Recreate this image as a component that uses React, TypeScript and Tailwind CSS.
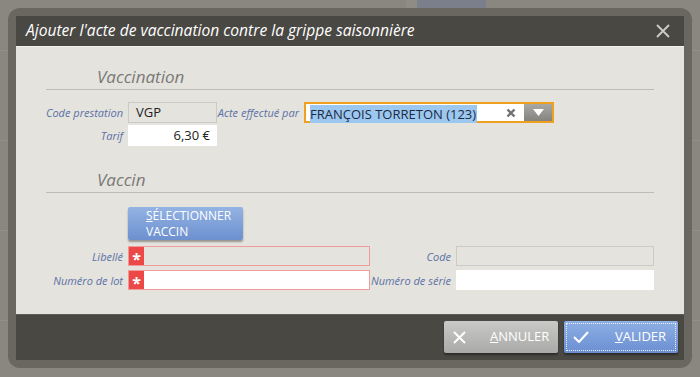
import React from "react";

const font = { fontFamily: '"Open Sans", "Noto Sans", sans-serif' };

function Label({ children, w }: { children: React.ReactNode; w: string }) {
  return (
    <div className={`${w} flex shrink-0 justify-end whitespace-nowrap pr-[5px] text-[11px] italic leading-none text-[#5c71a6]`}>
      {children}
    </div>
  );
}

function Required({ white }: { white?: boolean }) {
  return (
    <div className="flex h-[20px] w-[242px] border border-[#f19a9a]">
      <div className="flex w-[15px] items-center justify-center bg-[#ec4848] text-[16px] font-bold leading-none text-white">
        <span className="mt-[5px]">*</span>
      </div>
      <div className={`flex-1 ${white ? "bg-white" : "bg-[#e4e3de]"}`} />
    </div>
  );
}

export default function App() {
  return (
    <div
      className="relative h-[377px] w-[700px] overflow-hidden bg-[#8a8680] p-[8px] bg-[repeating-linear-gradient(to_bottom,transparent_0px,transparent_50px,#928e88_50px,#928e88_51px,transparent_51px,transparent_90px)]"
      style={font}
    >
      <div className="absolute left-[406px] top-0 h-[8px] w-[11px] bg-[#8f8b85]" />
      <div className="absolute left-[417px] top-0 h-[8px] w-[69px] bg-[#7b7f8b]" />
      <div className="relative flex h-[360px] w-[684px] flex-col rounded-[12px] bg-[#6a6761] p-[8px]">
        {/* Header */}
        <div className="flex h-[30px] shrink-0 items-center justify-between bg-[#4a4843] pl-[10px] pr-[14px]">
          <span className="text-[15.6px] italic text-white">
            Ajouter l'acte de vaccination contre la grippe saisonnière
          </span>
          <svg width="14" height="14" viewBox="0 0 14 14">
            <path d="M1 1 L13 13 M13 1 L1 13" stroke="#cfcdc8" strokeWidth="1.8" />
          </svg>
        </div>

        {/* Body */}
        <div className="flex h-[268px] shrink-0 flex-col border-t border-[#f2f1ee] bg-[#e4e3de] px-[30px] pt-[17px]">
          <div className="flex h-[26px] items-center border-b border-[#bdbcb8] pl-[51px] text-[17px] italic text-[#7a7976]">
            Vaccination
          </div>

          <div className="mt-[12px] flex h-[21px] items-center">
            <Label w="w-[82px]">Code prestation</Label>
            <div className="flex h-[21px] w-[89px] items-center border border-[#cbcac6] bg-[#e4e3de] pl-[7px] text-[13px] text-[#222]">
              VGP
            </div>
            <Label w="w-[87px]">Acte effectué par</Label>
            <div className="flex h-[21px] w-[250px] items-center border-2 border-[#f0a020] bg-white">
              <div className="ml-[4px] flex-1">
                <span className="bg-[#9cc8f0] pr-[1px] text-[13px] leading-[17px] text-[#1d2a44]">
                  FRANÇOIS TORRETON (123)
                </span>
              </div>
              <svg width="10" height="10" viewBox="0 0 10 10" className="mr-[8px]">
                <path d="M1.5 1.5 L8.5 8.5 M8.5 1.5 L1.5 8.5" stroke="#707070" strokeWidth="2.4" />
              </svg>
              <div className="flex h-[17px] w-[28px] items-center justify-center bg-[linear-gradient(to_bottom,#a9a8a4,#85837e)]">
                <svg width="11" height="8" viewBox="0 0 11 8">
                  <path d="M0 0 H11 L5.5 7 Z" fill="white" />
                </svg>
              </div>
            </div>
          </div>

          <div className="mt-[2px] flex h-[21px] items-center">
            <Label w="w-[82px]">Tarif</Label>
            <div className="flex h-[21px] w-[89px] items-center justify-end bg-white pr-[7px] text-[13px] text-[#222]">
              6,30 €
            </div>
          </div>

          <div className="mt-[21px] flex h-[26px] items-center border-b border-[#bdbcb8] pl-[51px] text-[17px] italic text-[#7a7976]">
            Vaccin
          </div>

          <div className="mt-[14px] pl-[82px]">
            <div className="flex h-[33px] w-[115px] flex-col justify-center rounded-[2px] bg-[linear-gradient(to_bottom,#93b3e3,#6d90cf)] pl-[18px] text-[12px] leading-[16px] text-white shadow-[0_2px_2px_rgba(0,0,0,0.35)]">
              <span className="underline decoration-transparent">
                <span className="underline decoration-white">S</span>ÉLECTIONNER
              </span>
              <span>VACCIN</span>
            </div>
          </div>

          <div className="mt-[6px] flex h-[20px] items-center">
            <Label w="w-[82px]">Libellé</Label>
            <Required />
            <Label w="w-[86px]">Code</Label>
            <div className="h-[20px] w-[198px] border border-[#cbcac6] bg-[#e4e3de]" />
          </div>
          <div className="mt-[4px] flex h-[20px] items-center">
            <Label w="w-[82px]">Numéro de lot</Label>
            <Required white />
            <Label w="w-[86px]">Numéro de série</Label>
            <div className="h-[20px] w-[198px] bg-white" />
          </div>
        </div>

        {/* Footer */}
        <div className="flex h-[46px] shrink-0 justify-end gap-[6px] border-t border-[#5e5c57] bg-[#4a4843] pr-[6px] pt-[6px]">
          <div className="flex h-[32px] w-[114px] items-center rounded-[2px] bg-[linear-gradient(to_bottom,#c9c9c7,#a9a9a7)] pl-[9px] text-[13px] text-white shadow-[0_2px_2px_rgba(0,0,0,0.4)]">
            <svg width="13" height="13" viewBox="0 0 13 13">
              <path d="M1 1 L12 12 M12 1 L1 12" stroke="white" strokeWidth="2" />
            </svg>
            <span className="ml-[24px]">
              <span className="underline">A</span>NNULER
            </span>
          </div>
          <div className="flex h-[32px] w-[114px] items-center rounded-[2px] bg-[linear-gradient(to_bottom,#8fb0e5,#6a8ed1)] p-[2px] text-[13px] text-white shadow-[0_2px_2px_rgba(0,0,0,0.4)]">
            <div className="flex h-full w-full items-center border border-dotted border-[#e8f0ff] pl-[6px]">
              <svg width="16" height="12" viewBox="0 0 16 12">
                <path d="M1 6 L6 11 L15 1" stroke="white" strokeWidth="2" fill="none" />
              </svg>
              <span className="ml-[26px]">
                <span className="underline">V</span>ALIDER
              </span>
            </div>
          </div>
        </div>
      </div>
    </div>
  );
}
